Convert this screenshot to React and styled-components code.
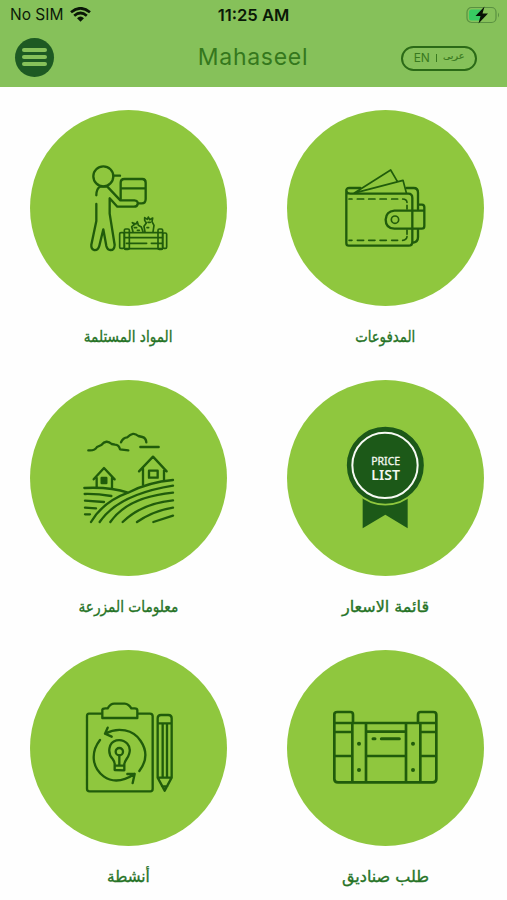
import React from 'react';
import styled, { createGlobalStyle } from 'styled-components';

const GlobalStyle = createGlobalStyle`
  * { box-sizing: border-box; }
  html, body { margin: 0; background: #fefefe; }
  body { font-family: Inter, "DejaVu Sans", sans-serif; }
`;

const Screen = styled.div`
  width: 507px;
  height: 900px;
  overflow: hidden;
  background: #fefefe;
`;

const Header = styled.header`
  height: 87px;
  background: #86c15a;
`;

const StatusBar = styled.div`
  display: grid;
  grid-template-columns: 1fr auto 1fr;
  align-items: center;
  height: 29px;
  padding: 0 7px 0 10px;
  color: #0c1b08;
`;

const Carrier = styled.div`
  display: flex;
  align-items: center;
  gap: 7px;
  font-size: 15.5px;
  line-height: 20px;
`;

const Clock = styled.time`
  margin-right: 3px;
  font-size: 16.6px;
  font-weight: 600;
  line-height: 20px;
  color: #0a1807;
`;

const BatteryIcon = styled.svg`
  display: block;
  justify-self: end;
`;

const NavBar = styled.div`
  display: grid;
  grid-template-columns: 1fr auto 1fr;
  align-items: center;
  height: 58px;
  padding: 0 30px 0 15px;
`;

const MenuButton = styled.button`
  display: flex;
  flex-direction: column;
  align-items: center;
  justify-content: center;
  gap: 3px;
  width: 39px;
  height: 39px;
  margin-top: -2px;
  padding: 0;
  border: 0;
  border-radius: 50%;
  background: #1d5a23;
`;

const MenuLine = styled.span`
  width: 25px;
  height: 4px;
  border-radius: 2px;
  background: #86c15a;
`;

const Title = styled.h1`
  margin: -2px -14px 0 0;
  font-size: 23px;
  font-weight: 400;
  line-height: 28px;
  letter-spacing: 0.7px;
  color: #35781d;
`;

const LanguageButton = styled.button`
  display: flex;
  align-items: center;
  justify-content: center;
  justify-self: end;
  gap: 6px;
  width: 76px;
  height: 25px;
  padding: 0;
  border: 2px solid #2b6a17;
  border-radius: 13px;
  background: transparent;
  color: #39791f;
  font: 12px/16px Inter, "DejaVu Sans", sans-serif;
`;

const LanguageDivider = styled.span`
  width: 1px;
  height: 8px;
  background: #39791f;
`;

const ArabicName = styled.span`
  font: 9.5px/14px "DejaVu Sans", sans-serif;
  margin-top: -4px;
  -webkit-text-stroke: 0.2px currentColor;
`;

const Tiles = styled.main`
  display: grid;
  grid-template-columns: 197px 197px;
  grid-auto-rows: 270px;
  column-gap: 60px;
  padding: 23px 0 0 30px;
`;

const Tile = styled.a`
  display: flex;
  flex-direction: column;
  align-items: center;
  color: #267326;
`;

const Disc = styled.div`
  width: 197px;
  height: 196px;
  border-radius: 50%;
  background: #8fc73e;
`;

const Drawing = styled.svg`
  display: block;
  width: 197px;
  height: 196px;
  fill: none;
  stroke: #205c0b;
  stroke-width: 7;
  stroke-linecap: round;
  stroke-linejoin: round;
`;

const Label = styled.span`
  margin-top: 18px;
  font-family: "DejaVu Sans", sans-serif;
  font-size: 16px;
  line-height: 26px;
  white-space: nowrap;
  -webkit-text-stroke: 0.35px currentColor;
  transform: scaleX(${(p) => p.$stretch});
`;

function Art({ x, y, children }) {
  return (
    <Drawing viewBox="0 0 197 196" aria-hidden="true">
      <g transform={`translate(${x} ${y}) scale(.33333)`}>{children}</g>
    </Drawing>
  );
}

function Delivery() {
  return (
    <Art x={45} y={45}>
      <circle cx="85" cy="64" r="30" />
      <path d="M115 62H135M64 121Q64 101 75 95M97 95L136 136H178Q190 137 188 147Q187 155 177 155H127L104 130V176L119 270Q118 286 106 285Q97 285 94 273L85 223L73 272Q69 287 57 285Q48 282 49 269L64 198V147M75 95H97" />
      <path d="M137 132V83Q137 72 148 72H202Q212 72 212 83V132Q212 145 200 145H190M137 100H212" />
      <g strokeWidth="5">
        <path d="M148 233H262M151 248H262M154 265H215M229 265H260M151 281H262" />
        <rect x="134" y="233" width="14" height="47" rx="4" />
        <rect x="148" y="222" width="15" height="61" rx="4" />
        <rect x="249" y="222" width="14" height="61" rx="4" />
        <rect x="263" y="234" width="12" height="46" rx="4" />
        <path d="M174 230L170 215L178 209L172 203L183 207L187 200L190 211L199 216L204 230M210 231L207 214L214 204L209 196V188L217 193L220 186L224 194L233 189L231 200L237 211L234 231M178 218H185M187 226H193M219 202H226M216 218H221" />
      </g>
    </Art>
  );
}

function Wallet() {
  return (
    <Art x={43} y={45}>
      <path d="M49 108Q48 99 58 99H91M49 105Q49 116 61 116H235Q247 116 247 129V260Q247 272 236 272H56Q49 272 49 264V105M230 99H251Q264 99 264 113V162M264 222V246Q264 261 250 263M267 149H276Q283 149 283 157V213Q283 221 275 221H193Q167 219 167 194Q168 169 193 167H280" strokeWidth="7" />
      <path d="M73 114L182 45L202 79M78 113L219 76L229 113" strokeWidth="5" />
      <path d="M57 132H66M82 132H101M116 132H135M150 132H169M185 132H203M218 132Q230 132 231 142M57 256H66M82 256H101M116 256H135M150 256H169M185 256H203M218 256Q230 255 231 245M231 151V162M231 225V238" strokeWidth="5" />
      <circle cx="195" cy="194" r="11" strokeWidth="5" />
    </Art>
  );
}

function Farm() {
  return (
    <Art x={45} y={42}>
      <path d="M40 85Q59 87 66 75L79 69Q94 51 110 66L120 68Q132 69 135 82L160 85M138 61Q144 47 157 46Q174 27 190 42L202 45Q213 48 214 61M196 75H251" />
      <path d="M56 172L87 138L119 172M65 168V196M111 167V198M192 148L234 104L275 148M204 140V188M267 140V175" />
      <rect x="80" y="168" width="14" height="15" fill="#205c0b" />
      <rect x="222" y="146" width="26" height="21" />
      <path d="M28 198Q105 194 159 212M159 212Q222 180 294 174M48 300Q83 240 159 212M74 300Q129 218 294 191M106 300Q158 225 294 212M143 300Q201 244 294 235M186 300Q236 266 294 257M235 300L294 281M29 216Q66 215 109 222M30 236L87 240M30 257L63 259M30 277H45" />
    </Art>
  );
}

function PriceList() {
  return (
    <Art x={43} y={40}>
      <path d="M98 230H233V325L166 284L98 325Z" fill="#1c5918" stroke="none" />
      <circle cx="166" cy="136" r="118" fill="#1c5918" stroke="#8fc73e" strokeWidth="5" />
      <circle cx="165" cy="136" r="98" stroke="#f6faf3" strokeWidth="6" />
      <text x="167" y="136" textAnchor="middle" fill="#f3f8ef" stroke="#f3f8ef" strokeWidth="1" fontFamily="Noto Sans, sans-serif" fontSize="34" textLength="87" lengthAdjust="spacingAndGlyphs">PRICE</text>
      <text x="167" y="179" textAnchor="middle" fill="#f3f8ef" stroke="none" fontFamily="Noto Sans, sans-serif" fontWeight="600" fontSize="44" textLength="86" lengthAdjust="spacingAndGlyphs">LIST</text>
    </Art>
  );
}

function Activities() {
  return (
    <Art x={45} y={45}>
      <path d="M81 56H42Q36 56 36 63V281Q36 289 44 289H226Q233 289 233 281V64Q233 56 225 56H187M82 69V44Q83 40 91 40H98Q107 25 119 26H149Q161 27 169 40H179Q187 40 187 46V69ZM248 248V70Q248 60 258 60H280Q290 60 290 70V248L269 287ZM249 85H290M249 248H290M263 87V247M276 87V247M261 274H277" />
      <path d="M75 135C46 172 51 218 86 244Q125 272 179 237M90 116C130 95 175 104 197 138C218 169 214 200 193 228M98 98L90 116L110 125M157 237L179 237L173 264" />
      <path d="M119 225V207Q119 200 113 192C96 174 101 142 124 136C151 131 171 153 162 178C159 190 148 197 148 208V226ZM119 212H148M133 181V209" />
      <circle cx="133" cy="170" r="11" />
    </Art>
  );
}

function Crate() {
  return (
    <Art x={38} y={50}>
      <path d="M28 69V43Q28 36 37 36H76Q84 36 84 44V69H279V44Q279 36 287 36H325Q334 36 334 44V237Q334 247 323 247H39Q28 247 28 237V69H84M279 69H334M82 72V245M123 72V245M243 72V245M286 72V245M29 96H80M124 95H242M287 96H333M29 168H80M124 168H242M287 168H333" strokeWidth="8" />
      <path d="M144 116H150M169 116H223" strokeWidth="9" />
      <g fill="#205c0b" stroke="none">
        <circle cx="102" cy="131" r="6" /><circle cx="102" cy="210" r="6" />
        <circle cx="264" cy="131" r="6" /><circle cx="264" cy="210" r="6" />
      </g>
    </Art>
  );
}

const items = [
  { label: 'المواد المستلمة', icon: Delivery, stretch: 0.85 },
  { label: 'المدفوعات', icon: Wallet, stretch: 0.83 },
  { label: 'معلومات المزرعة', icon: Farm, stretch: 0.855 },
  { label: 'قائمة الاسعار', icon: PriceList, stretch: 1 },
  { label: 'أنشطة', icon: Activities, stretch: 0.95 },
  { label: 'طلب صناديق', icon: Crate, stretch: 1 },
];

export default function App() {
  return (
    <Screen>
      <GlobalStyle />
      <Header>
        <StatusBar>
          <Carrier>
            No SIM
            <svg width="21" height="15" viewBox="0 0 21 15" fill="none" stroke="#0a1807" strokeWidth="2.7">
              <path d="M1 5.2Q10.5-2.6 20 5.2M4.2 8.7Q10.5 3.3 16.8 8.7" />
              <path d="M7 11.2Q10.5 8 14 11.2L10.5 14.8Z" fill="#0a1807" stroke="none" />
            </svg>
          </Carrier>
          <Clock>11:25 AM</Clock>
          <BatteryIcon width="34" height="18" viewBox="0 0 34 18">
            <rect x="1" y="1.5" width="29" height="15" rx="4.5" fill="none" stroke="#5a9141" strokeWidth="1.2" />
            <path d="M5.5 3.5H15V14.5H5.5Q3 14.5 3 12V6Q3 3.5 5.5 3.5" fill="#37cc62" />
            <path d="M32 6.5Q34 9 32 11.5Z" fill="#5a9141" />
            <path d="M18.5 .5L9.5 10H14.5L12.5 17.5L22 7.5H16.5Z" fill="#071205" />
          </BatteryIcon>
        </StatusBar>
        <NavBar>
          <MenuButton aria-label="Menu"><MenuLine /><MenuLine /><MenuLine /></MenuButton>
          <Title>Mahaseel</Title>
          <LanguageButton>
            <span>EN</span><LanguageDivider /><ArabicName lang="ar">عربى</ArabicName>
          </LanguageButton>
        </NavBar>
      </Header>
      <Tiles>
        {items.map(({ label, icon: Icon, stretch }) => (
          <Tile key={label}>
            <Disc><Icon /></Disc>
            <Label dir="rtl" lang="ar" $stretch={stretch}>{label}</Label>
          </Tile>
        ))}
      </Tiles>
    </Screen>
  );
}
